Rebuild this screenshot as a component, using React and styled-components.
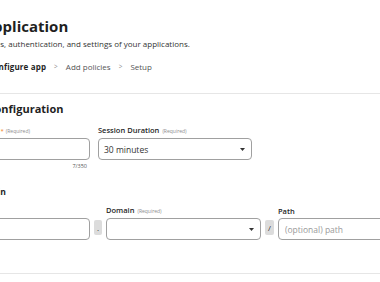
import React from 'react';
import styled, { createGlobalStyle } from 'styled-components';

const GlobalStyle = createGlobalStyle`
  html, body { margin: 0; padding: 0; background: #fff; }
  body {
    font-family: "Open Sans", "Noto Sans", sans-serif;
    color: #1f1f1f;
    overflow: hidden;
    width: 380px;
    height: 282px;
  }
  * { box-sizing: border-box; }
`;

const Page = styled.div`
  margin-left: -72px;
  width: 660px;
  padding-top: 16px;
`;

const Header = styled.header`
  display: flex;
  flex-direction: column;
`;

const Title = styled.h1`
  margin: 0;
  font-size: 15px;
  font-weight: 700;
  line-height: 20px;
  color: #1f1f1f;
`;

const Subtitle = styled.p`
  margin: 2px 0 0;
  font-size: 8px;
  line-height: 12px;
  color: #333;
  white-space: nowrap;
`;

const Steps = styled.nav`
  display: flex;
  align-items: center;
  gap: 8px;
  margin-top: 11px;
  font-size: 8px;
  line-height: 12px;
  white-space: nowrap;
`;

const Step = styled.span`
  font-weight: ${(p) => (p.$active ? 700 : 400)};
  letter-spacing: ${(p) => (p.$active ? '0.15px' : '0')};
  color: ${(p) => (p.$active ? '#1f1f1f' : '#555')};
`;

const Chevron = styled.span`
  color: #8a8a8a;
  font-size: 6.5px;
`;

const Card = styled.section`
  margin-top: 20px;
  margin-left: -27px;
  padding: 8px 20px 33px;
  border: 1px solid #e6e6e6;
  border-radius: 4px;
`;

const CardTitle = styled.h2`
  margin: 0 0 9px;
  font-size: 11px;
  font-weight: 700;
  line-height: 14px;
  color: #1f1f1f;
`;

const SectionTitle = styled.h3`
  margin: 17px 0 7px;
  font-size: 8.6px;
  font-weight: 700;
  line-height: 11px;
  color: #262626;
`;

const Row = styled.div`
  display: flex;
  align-items: ${(p) => p.$align || 'flex-start'};
  gap: ${(p) => p.$gap}px;
`;

const Field = styled.div`
  display: flex;
  flex-direction: column;
  width: ${(p) => p.$w}px;
  flex-shrink: 0;
`;

const Label = styled.label`
  display: flex;
  align-items: baseline;
  gap: 3px;
  margin-bottom: 2px;
  font-size: 7.5px;
  font-weight: 600;
  line-height: 10px;
  color: #262626;
  white-space: nowrap;
`;

const Req = styled.span`
  font-size: 5px;
  font-weight: 400;
  color: #8c8c8c;
`;

const Star = styled.span`
  margin-left: 12px;
  margin-right: -1px;
  color: #f38020;
  font-size: 6px;
  font-weight: 400;
`;

const TextInput = styled.input`
  width: 100%;
  height: 22px;
  padding: 0 6px;
  border: 1px solid #a0a0a0;
  border-radius: 4px;
  font-family: inherit;
  font-size: 8.5px;
  color: #333;
  background: #fff;
  outline: none;
  &::placeholder { color: #9a9a9a; }
`;

const SelectBox = styled.div`
  display: flex;
  align-items: center;
  justify-content: space-between;
  width: 100%;
  height: 22px;
  padding: 0 6px 0 5px;
  border: 1px solid #a0a0a0;
  border-radius: 4px;
  font-size: 8.5px;
  color: #333;
  background: #fff;
`;

const Counter = styled.div`
  align-self: flex-end;
  margin-top: 2px;
  margin-right: 3px;
  font-size: 5.5px;
  line-height: 8px;
  color: #555;
`;

const Joiner = styled.span`
  display: flex;
  align-items: center;
  justify-content: center;
  width: ${(p) => p.$w || 8}px;
  height: 15px;
  margin-bottom: 5px;
  border-radius: 2px;
  background: #dcdcdc;
  font-size: 8px;
  color: #333;
`;

const Caret = () => (
  <svg width="5" height="3" viewBox="0 0 5 3" aria-hidden="true">
    <path d="M0 0h5L2.5 3z" fill="#333" />
  </svg>
);

export default function App() {
  return (
    <>
      <GlobalStyle />
      <Page>
        <Header>
          <Title>Add an application</Title>
          <Subtitle>Manage app policies, authentication, and settings of your applications.</Subtitle>
          <Steps>
            <Step>Select type</Step>
            <Chevron>&gt;</Chevron>
            <Step $active>Configure app</Step>
            <Chevron>&gt;</Chevron>
            <Step>Add policies</Step>
            <Chevron>&gt;</Chevron>
            <Step>Setup</Step>
          </Steps>
        </Header>
        <Card>
          <CardTitle>Application Configuration</CardTitle>
          <Row $gap={8}>
            <Field $w={168}>
              <Label>Application name<Star>*</Star><Req>(Required)</Req></Label>
              <TextInput defaultValue="Example" />
              <Counter>7/350</Counter>
            </Field>
            <Field $w={154}>
              <Label>Session Duration <Req>(Required)</Req></Label>
              <SelectBox>30 minutes <Caret /></SelectBox>
            </Field>
          </Row>
          <SectionTitle>Application domain</SectionTitle>
          <Row $gap={4} $align="flex-end">
            <Field $w={168}>
              <Label>Subdomain</Label>
              <TextInput />
            </Field>
            <Joiner>.</Joiner>
            <Field $w={155}>
              <Label>Domain <Req>(Required)</Req></Label>
              <SelectBox><span /> <Caret /></SelectBox>
            </Field>
            <Joiner $w={9}>/</Joiner>
            <Field $w={154}>
              <Label>Path</Label>
              <TextInput placeholder="(optional) path" />
            </Field>
          </Row>
        </Card>
      </Page>
    </>
  );
}
